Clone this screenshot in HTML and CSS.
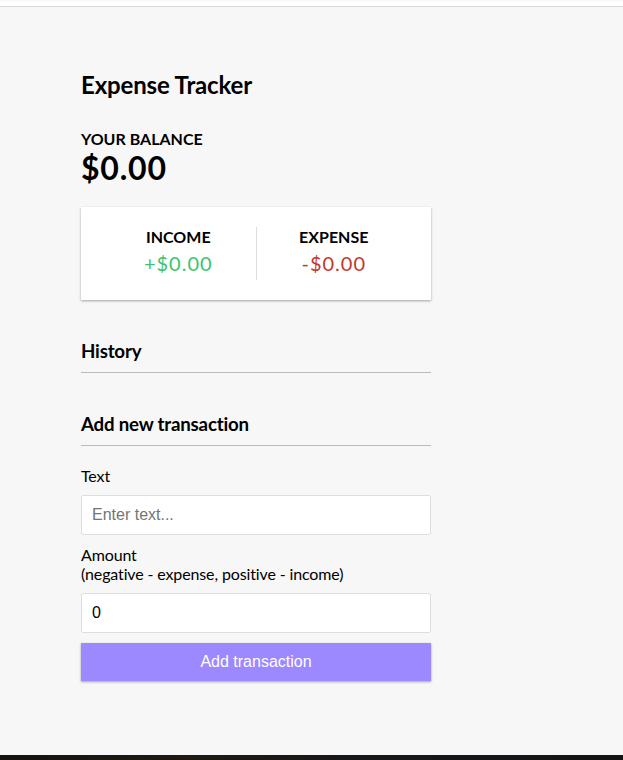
FILE: index.html
```html
<!DOCTYPE html>
<html lang="en">
<head>
<meta charset="UTF-8">
<title>Expense Tracker</title>
<link rel="stylesheet" href="styles.css">
</head>
<body>
<div class="page">
  <div class="topbar"></div>
  <main class="container">
    <h2 class="title">Expense Tracker</h2>
    <h4 class="caps">Your Balance</h4>
    <h1 class="balance">$0.00</h1>
    <div class="inc-exp">
      <div class="col col-first">
        <h4 class="caps">Income</h4>
        <p class="money plus">+$0.00</p>
      </div>
      <div class="col">
        <h4 class="caps">Expense</h4>
        <p class="money minus">-$0.00</p>
      </div>
    </div>
    <h3 class="section">History</h3>
    <ul class="list"></ul>
    <h3 class="section">Add new transaction</h3>
    <form class="form">
      <div class="form-control">
        <label class="label" for="text">Text</label>
        <input class="field" type="text" id="text" placeholder="Enter text...">
      </div>
      <div class="form-control">
        <label class="label" for="amount">Amount <br>(negative - expense, positive - income)</label>
        <input class="field" type="number" id="amount" value="0">
      </div>
      <button class="btn" type="button">Add transaction</button>
    </form>
  </main>
  <div class="bottombar"></div>
</div>
</body>
</html>
```
FILE: styles.css
```css
* { box-sizing: border-box; }
html, body { margin: 0; padding: 0; }
body {
  background-color: #f7f7f7;
  font-family: "Lato", "Liberation Sans", sans-serif;
  color: #000;
}
.page {
  min-height: 100vh;
  display: flex;
  flex-direction: column;
}
.topbar {
  height: 7px;
  background: linear-gradient(#f4f4f4, #ffffff 40%, #ffffff);
  border-bottom: 1px solid #d8d8d8;
}
.container {
  flex: 1;
  width: 350px;
  margin: 0 0 0 81px;
  padding-top: 63px;
}
.title {
  font-size: 24px;
  letter-spacing: -0.15px;
  margin: 0 0 30px;
}
.caps {
  margin: 0;
  font-size: 16px;
  text-transform: uppercase;
}
.balance {
  font-size: 32px;
  letter-spacing: 0.8px;
  margin: 0;
}
.inc-exp {
  background-color: #fff;
  box-shadow: 0 1px 3px rgba(0,0,0,0.12), 0 1px 2px rgba(0,0,0,0.24);
  padding: 20px;
  display: flex;
  justify-content: space-between;
  margin: 20px 0;
}
.col { flex: 1; text-align: center; }
.col-first { border-right: 1px solid #dedede; }
.money {
  font-size: 20px;
  letter-spacing: 1px;
  margin: 5px 0;
}
.plus { color: #3cc46e; }
.minus { color: #c0392b; }
.section {
  font-size: 18.72px;
  letter-spacing: -0.2px;
  border-bottom: 1px solid #bbb;
  padding-bottom: 10px;
  margin: 40px 0 10px;
}
.list {
  list-style-type: none;
  padding: 0;
  margin: 16px 0 40px;
}
.form { margin: 0; }
.label {
  display: inline-block;
  margin: 10px 0;
  font-size: 16px;
  letter-spacing: -0.13px;
}
.field {
  border: 1px solid #dedede;
  border-radius: 2px;
  display: block;
  font-family: "Liberation Sans", Arial, sans-serif;
  font-size: 16px;
  padding: 10px;
  width: 100%;
  background: #fff;
  color: #000;
  line-height: normal;
}
.field::placeholder { color: #757575; }
.btn {
  cursor: pointer;
  background-color: #9c88ff;
  box-shadow: 0 1px 3px rgba(0,0,0,0.12), 0 1px 2px rgba(0,0,0,0.24);
  color: #fff;
  border: 0;
  display: block;
  font-family: "Liberation Sans", Arial, sans-serif;
  font-size: 16px;
  margin: 10px 0 30px;
  padding: 10px;
  width: 100%;
}
.bottombar {
  height: 5px;
  background: linear-gradient(90deg, #15120f, #1f1912 30%, #17161a 60%, #141414);
}
```
